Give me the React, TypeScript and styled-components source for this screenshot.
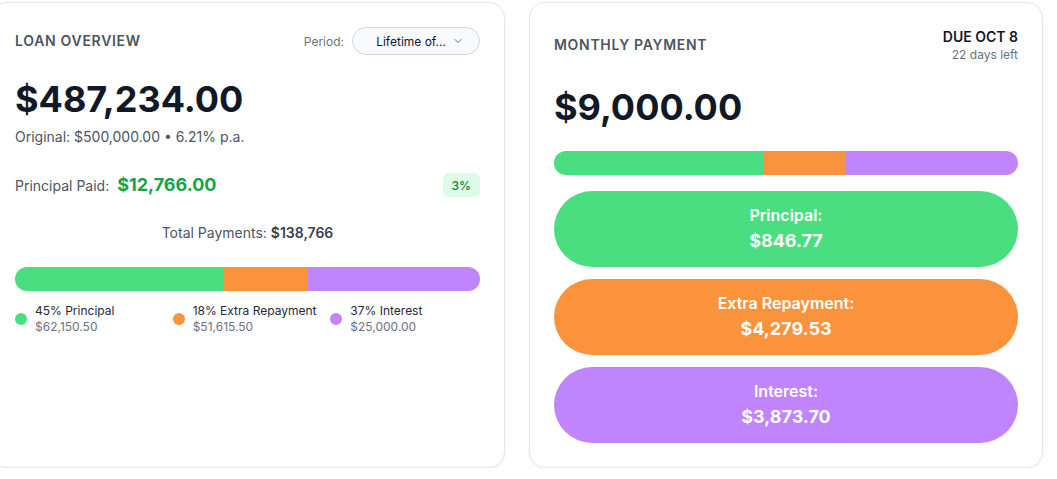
import React from "react";
import styled, { createGlobalStyle } from "styled-components";

const Global = createGlobalStyle`
  html, body { margin: 0; padding: 0; background: #ffffff; }
  body { font-family: Inter, "Noto Sans", sans-serif; color: #111827; -webkit-font-smoothing: antialiased; }
  * { box-sizing: border-box; }
`;

const Page = styled.div`
  display: flex;
  gap: 24px;
  padding-top: 2px;
  margin-left: -10px;
  width: 1080px;
  align-items: stretch;
`;

const Card = styled.section<{ $w: number }>`
  flex: 0 0 ${(p) => p.$w}px;
  background: #fff;
  border: 1px solid #e5e7eb;
  border-radius: 16px;
  box-shadow: 0 1px 3px rgba(0, 0, 0, 0.06);
  padding: 24px;
  display: flex;
  flex-direction: column;
`;

const HeaderRow = styled.div<{ $align?: string }>`
  display: flex;
  justify-content: space-between;
  align-items: ${(p) => p.$align || "center"};
`;

const Title = styled.h2<{ $mt?: number }>`
  margin: ${(p) => p.$mt || 0}px 0 0;
  font-size: 14px;
  line-height: 20px;
  font-weight: 600;
  letter-spacing: 0.05em;
  text-transform: uppercase;
  color: #4b5563;
`;

const PeriodWrap = styled.div`
  display: flex;
  align-items: center;
  gap: 8px;
`;

const PeriodLabel = styled.span`
  font-size: 12px;
  color: #6b7280;
`;

const Select = styled.button`
  width: 128px;
  height: 28px;
  border: 1px solid #d1d5db;
  border-radius: 14px;
  background: #f9fafb;
  font-family: inherit;
  font-size: 12px;
  color: #111827;
  display: flex;
  align-items: center;
  justify-content: flex-end;
  gap: 6px;
  padding: 0 15px 0 0;
`;

const BigAmount = styled.div<{ $mt: number }>`
  margin-top: ${(p) => p.$mt}px;
  font-size: 36px;
  line-height: 40px;
  font-weight: 700;
  color: #111827;
`;

const SubText = styled.div`
  margin-top: 8px;
  font-size: 14px;
  line-height: 20px;
  color: #4b5563;
`;

const PaidRow = styled.div`
  margin-top: 24px;
  height: 28px;
  display: flex;
  align-items: center;
  justify-content: space-between;
`;

const PaidLabel = styled.div`
  display: flex;
  align-items: center;
  gap: 8px;
  font-size: 14px;
  color: #4b5563;
`;

const PaidValue = styled.span`
  font-size: 18px;
  line-height: 28px;
  font-weight: 700;
  color: #16a34a;
`;

const Badge = styled.span`
  height: 24px;
  padding: 0 9px;
  display: inline-flex;
  align-items: center;
  border-radius: 6px;
  background: #dcfce7;
  color: #15803d;
  font-size: 12px;
  font-weight: 500;
`;

const Centered = styled.div`
  margin-top: 24px;
  text-align: center;
  font-size: 14px;
  line-height: 20px;
  color: #4b5563;
  strong { font-weight: 600; color: #374151; }
`;

const Bar = styled.div<{ $mt: number }>`
  margin-top: ${(p) => p.$mt}px;
  height: 24px;
  border-radius: 12px;
  overflow: hidden;
  display: flex;
`;

const Segment = styled.div<{ $color: string }>`
  height: 100%;
  background: ${(p) => p.$color};
`;

const Legend = styled.div`
  margin-top: 12px;
  display: grid;
  grid-template-columns: repeat(3, 1fr);
  gap: 8px;
`;

const LegendItem = styled.div`
  display: flex;
  align-items: center;
  gap: 8px;
`;

const Dot = styled.span<{ $color: string }>`
  width: 12px;
  height: 12px;
  border-radius: 50%;
  background: ${(p) => p.$color};
  flex: none;
`;

const LegendText = styled.div`
  font-size: 12px;
  line-height: 16px;
  color: #1f2937;
  span { display: block; color: #6b7280; }
`;

const Due = styled.div`
  text-align: right;
  font-size: 14px;
  line-height: 20px;
  font-weight: 600;
  color: #111827;
  span { display: block; font-size: 12px; line-height: 16px; font-weight: 400; color: #6b7280; }
`;

const Pills = styled.div`
  margin-top: 16px;
  display: flex;
  flex-direction: column;
  gap: 12px;
`;

const Pill = styled.div<{ $color: string }>`
  height: 76px;
  border-radius: 38px;
  background: ${(p) => p.$color};
  display: flex;
  flex-direction: column;
  align-items: center;
  justify-content: center;
  color: #fff;
`;

const PillLabel = styled.div`
  font-size: 16px;
  line-height: 24px;
  font-weight: 600;
`;

const PillValue = styled.div`
  font-size: 18px;
  line-height: 28px;
  font-weight: 700;
`;

const GREEN = "#4ade80";
const ORANGE = "#fb923c";
const PURPLE = "#c084fc";

const segments = [
  { pct: 45, color: GREEN },
  { pct: 18, color: ORANGE },
  { pct: 37, color: PURPLE },
];

const legend = [
  { label: "45% Principal", value: "$62,150.50", color: GREEN },
  { label: "18% Extra Repayment", value: "$51,615.50", color: ORANGE },
  { label: "37% Interest", value: "$25,000.00", color: PURPLE },
];

const pills = [
  { label: "Principal:", value: "$846.77", color: GREEN },
  { label: "Extra Repayment:", value: "$4,279.53", color: ORANGE },
  { label: "Interest:", value: "$3,873.70", color: PURPLE },
];

function StackBar({ mt }: { mt: number }) {
  return (
    <Bar $mt={mt}>
      {segments.map((s, i) => (
        <Segment key={i} $color={s.color} style={{ width: `${s.pct}%` }} />
      ))}
    </Bar>
  );
}

const Chevron = () => (
  <svg width="12" height="12" viewBox="0 0 24 24" fill="none" stroke="#6b7280" strokeWidth="2" strokeLinecap="round" strokeLinejoin="round">
    <path d="m6 9 6 6 6-6" />
  </svg>
);

export default function App() {
  return (
    <>
      <Global />
      <Page>
        <Card $w={515}>
          <HeaderRow>
            <Title>Loan Overview</Title>
            <PeriodWrap>
              <PeriodLabel>Period:</PeriodLabel>
              <Select>
                Lifetime of...
                <Chevron />
              </Select>
            </PeriodWrap>
          </HeaderRow>
          <BigAmount $mt={24}>$487,234.00</BigAmount>
          <SubText>Original: $500,000.00 • 6.21% p.a.</SubText>
          <PaidRow>
            <PaidLabel>
              Principal Paid: <PaidValue>$12,766.00</PaidValue>
            </PaidLabel>
            <Badge>3%</Badge>
          </PaidRow>
          <Centered>
            Total Payments: <strong>$138,766</strong>
          </Centered>
          <StackBar mt={24} />
          <Legend>
            {legend.map((l) => (
              <LegendItem key={l.label}>
                <Dot $color={l.color} />
                <LegendText>
                  {l.label}
                  <span>{l.value}</span>
                </LegendText>
              </LegendItem>
            ))}
          </Legend>
        </Card>
        <Card $w={514}>
          <HeaderRow $align="flex-start">
            <Title $mt={8}>Monthly Payment</Title>
            <Due>
              DUE OCT 8
              <span>22 days left</span>
            </Due>
          </HeaderRow>
          <BigAmount $mt={24}>$9,000.00</BigAmount>
          <StackBar mt={24} />
          <Pills>
            {pills.map((p) => (
              <Pill key={p.label} $color={p.color}>
                <PillLabel>{p.label}</PillLabel>
                <PillValue>{p.value}</PillValue>
              </Pill>
            ))}
          </Pills>
        </Card>
      </Page>
    </>
  );
}
